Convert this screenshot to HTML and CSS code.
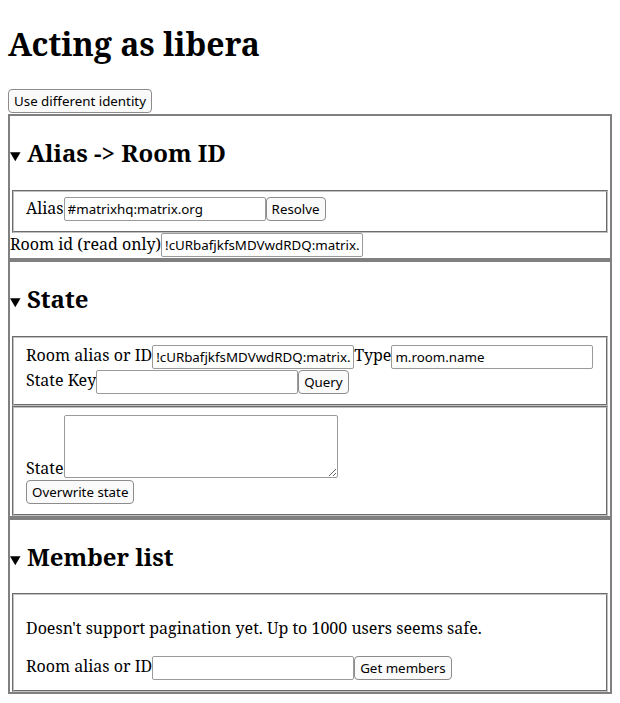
FILE: index.html
```html
<!DOCTYPE html>
<html>
<head>
<meta charset="utf-8">
<title>Acting as libera</title>
<link rel="stylesheet" href="styles.css">
</head>
<body>
<h1 class="title">Acting as libera</h1>
<div class="identity"><button class="btn">Use different identity</button></div>
<details open class="section">
<summary class="summary"><h2 class="section-title">Alias -&gt; Room ID</h2></summary>
<fieldset class="group">
<label class="field">Alias<input class="text" value="#matrixhq:matrix.org"></label><button class="btn">Resolve</button>
</fieldset>
<div class="readonly-row"><label class="field">Room id (read only)<input class="text" readonly value="!cURbafjkfsMDVwdRDQ:matrix.org"></label></div>
</details>
<details open class="section">
<summary class="summary"><h2 class="section-title">State</h2></summary>
<fieldset class="group">
<label class="field">Room alias or ID<input class="text low" value="!cURbafjkfsMDVwdRDQ:matrix.org"></label><label class="field">Type<input class="text low" value="m.room.name"></label><br><label class="field">State Key<input class="text low" value=""></label><button class="btn low">Query</button>
</fieldset>
<fieldset class="group">
<label class="field">State<textarea class="area"></textarea></label><br><button class="btn low">Overwrite state</button>
</fieldset>
</details>
<details open class="section">
<summary class="summary"><h2 class="section-title">Member list</h2></summary>
<fieldset class="group">
<p class="note">Doesn't support pagination yet. Up to 1000 users seems safe.</p>
<label class="field">Room alias or ID<input class="text low" value=""></label><button class="btn low">Get members</button>
</fieldset>
</details>
</body>
</html>
```

FILE: styles.css
```css
html {
  background: #ffffff;
}

body {
  margin: 0;
  padding: 8px;
  font-family: "Noto Serif", "DejaVu Serif", serif;
  font-size: 16px;
  color: #000000;
}

.title {
  font-size: 32px;
  font-weight: bold;
  margin: 13.8px 0 24.2px;
}

.identity {
  display: flex;
  padding-bottom: 1px;
}

.section {
  border: 2px solid #808080;
  margin: 0;
  padding: 0;
}

.summary {
  cursor: default;
}

.section-title {
  display: inline-block;
  font-size: 24px;
  font-weight: bold;
  margin: 20px 0 20.7px;
}

.group {
  margin: 0 2px;
  padding: 5.6px 12px 10px;
  border: 2px groove #c0c0c0;
  min-inline-size: min-content;
}

.field {
  font-size: 16px;
}

.readonly-row {
  padding-bottom: 1px;
}

.text {
  font-family: "Noto Sans", "Open Sans", sans-serif;
  font-size: 13.333px;
  width: 202px;
  height: 24px;
  box-sizing: border-box;
  padding: 2px 3px;
  border: 1px solid #9a9a9a;
  border-radius: 2px;
  background: #ffffff;
  color: #000000;
  margin: 0;
}

.low {
  vertical-align: -1px;
}

.area {
  font-family: "Liberation Mono", monospace;
  font-size: 13.333px;
  width: 274px;
  height: 63px;
  box-sizing: border-box;
  border: 1px solid #9a9a9a;
  border-radius: 2px;
  background: #ffffff;
  margin: 1.5px 0 0;
  vertical-align: -4px;
}

.btn {
  font-family: "Noto Sans", "Open Sans", sans-serif;
  font-size: 13.333px;
  height: 24px;
  box-sizing: border-box;
  padding: 2px 5px;
  border: 1px solid #8c8c8c;
  border-radius: 4px;
  background: #fafafa;
  color: #000000;
  margin: 0;
}

.note {
  margin: 16px 0;
}
```
